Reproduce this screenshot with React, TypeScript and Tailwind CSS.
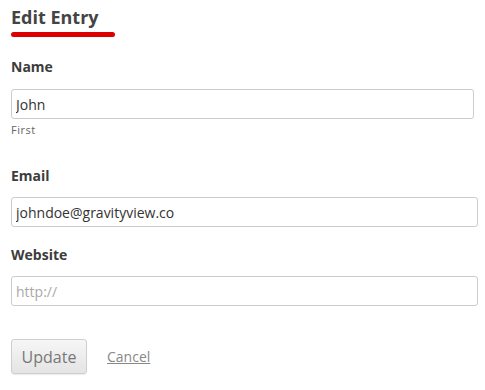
import React, { useState } from 'react';

const labelCls = "block text-[14px] leading-[20px] font-bold text-[#3c3c3c]";
const inputCls = "block h-[30px] w-full rounded-[3px] border border-[#cccccc] bg-white px-[4px] text-[14px] text-[#333] placeholder:text-[#a9a9a9] outline-none";

export default function App() {
    const [first, setFirst] = useState('John');
    const [email, setEmail] = useState('johndoe@gravityview.co');
    const [website, setWebsite] = useState('');

    return (
        <div className="min-h-[390px] bg-white px-[11px] pt-[5px] font-['Open_Sans',sans-serif]">
            <h2 className="text-[18px] leading-[24px] font-bold text-[#444]">Edit Entry</h2>
            <div className="mt-[3px] h-[5px] w-[104px] rounded-full bg-[#dd0000]" />

            <form onSubmit={(e) => e.preventDefault()}>
                <div className="mt-[20px]">
                    <label className={labelCls}>Name</label>
                    <div className="mt-[12px] w-[463px]">
                        <input className={inputCls} value={first} onChange={(e) => setFirst(e.target.value)} />
                        <span className="mt-[3px] block text-[11px] leading-[15px] tracking-[0.5px] text-[#666]">First</span>
                    </div>
                </div>

                <div className="mt-[29px]">
                    <label className={labelCls}>Email</label>
                    <div className="mt-[11px] w-[467px]">
                        <input className={inputCls} value={email} onChange={(e) => setEmail(e.target.value)} />
                    </div>
                </div>

                <div className="mt-[18px]">
                    <label className={labelCls}>Website</label>
                    <div className="mt-[11px] w-[467px]">
                        <input className={inputCls} placeholder="http://" value={website} onChange={(e) => setWebsite(e.target.value)} />
                    </div>
                </div>

                <div className="mt-[33px] flex items-center gap-[20px]">
                    <button type="submit" className="h-[35px] w-[76px] rounded-[3px] border border-[#cfcfcf] bg-gradient-to-b from-[#f6f6f6] to-[#e4e4e4] text-[16px] text-[#777] shadow-[0_1px_1px_rgba(0,0,0,0.08)]">
                        Update
                    </button>
                    <a href="#" className="text-[14px] text-[#888] underline">Cancel</a>
                </div>
            </form>
        </div>
    );
}
